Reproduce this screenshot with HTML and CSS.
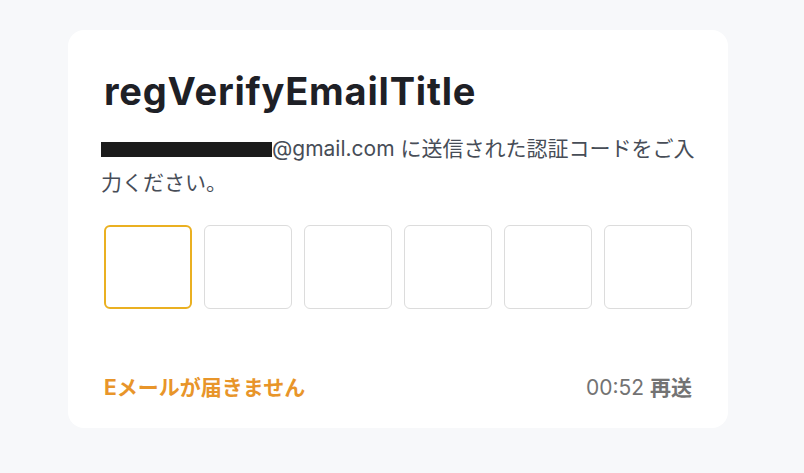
FILE: index.html
```html
<!DOCTYPE html>
<html lang="ja">
<head>
<meta charset="utf-8">
<link rel="stylesheet" href="styles.css">
</head>
<body>
<div class="card">
  <h1 class="title">regVerifyEmailTitle</h1>
  <p class="desc"><span class="redact"></span>@gmail.com に送信された認証コードをご入力ください。</p>
  <div class="codes">
    <div class="code active"></div>
    <div class="code"></div>
    <div class="code"></div>
    <div class="code"></div>
    <div class="code"></div>
    <div class="code"></div>
  </div>
  <div class="footer">
    <span class="noemail">Eメールが届きません</span>
    <span class="timer">00:52 <b>再送</b></span>
  </div>
</div>
</body>
</html>
```
FILE: styles.css
```css
html, body {
  margin: 0;
  padding: 0;
  background: #f7f8fa;
  width: 804px;
  height: 473px;
  overflow: hidden;
  font-family: "Noto Sans", "Noto Sans CJK JP", sans-serif;
}
.card {
  margin: 30px 0 0 68px;
  width: 660px;
  height: 398px;
  box-sizing: border-box;
  background: #fff;
  border-radius: 16px;
  padding: 31px 36px 0 36px;
  display: flex;
  flex-direction: column;
}
.title {
  margin: 0;
  font-family: "Inter", "Noto Sans CJK JP", sans-serif;
  font-weight: 700;
  font-size: 38px;
  line-height: 60px;
  color: #1e2026;
  letter-spacing: 0.8px;
}
.desc {
  margin: 11px -10px 0 -3px;
  font-size: 21px;
  line-height: 34px;
  color: #474d57;
  font-family: "Inter", "Noto Sans CJK JP", sans-serif;
}
.redact {
  display: inline-block;
  width: 171px;
  height: 15px;
  background: #1b1b1b;
  vertical-align: -1px;
}
.codes {
  display: flex;
  gap: 12px;
  margin-top: 25px;
}
.code {
  width: 88px;
  height: 84px;
  box-sizing: border-box;
  border: 1px solid #dcdcdc;
  border-radius: 6px;
}
.code.active {
  border: 2.5px solid #eab021;
}
.footer {
  display: flex;
  justify-content: space-between;
  align-items: center;
  margin-top: 62px;
  font-size: 21px;
  font-family: "Inter", "Noto Sans CJK JP", sans-serif;
}
.noemail {
  color: #e8952a;
  font-weight: 700;
}
.timer {
  color: #737373;
}
.timer b {
  font-weight: 700;
}
```
